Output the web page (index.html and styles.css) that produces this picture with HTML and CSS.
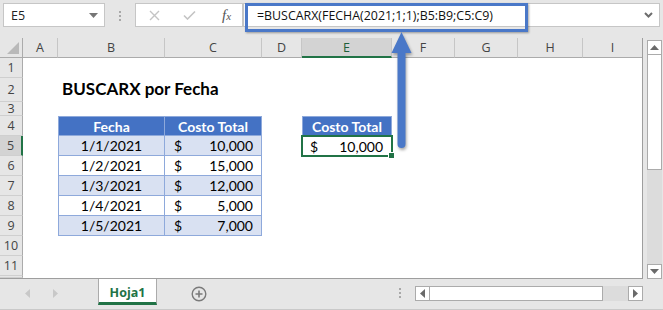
FILE: index.html
```html
<!DOCTYPE html>
<html lang="es">
<head>
    <meta charset="UTF-8">
    <title>BUSCARX por Fecha</title>
    <link rel="stylesheet" href="styles.css">
</head>
<body>
<div class="app">
    <!-- formula bar -->
    <div class="formula-bar">
        <div class="name-box">
            <span>E5</span>
            <svg width="9" height="5" viewBox="0 0 9 5"><polygon points="0,0 9,0 4.5,5" fill="#767676"/></svg>
        </div>
        <div class="grip"><span></span><span></span><span></span></div>
        <div class="fx-buttons">
            <svg class="btn-x" width="11" height="11" viewBox="0 0 11 11"><path d="M1 1L10 10M10 1L1 10" stroke="#c4c4c4" stroke-width="1.4"/></svg>
            <svg class="btn-ok" width="13" height="10" viewBox="0 0 13 10"><path d="M1 5.5L4.5 9L12 1.5" stroke="#c4c4c4" stroke-width="1.6" fill="none"/></svg>
            <span class="fx">f<small>x</small></span>
        </div>
        <div class="formula">
            <span>=BUSCARX(FECHA(2021;1;1);B5:B9;C5:C9)</span>
            <svg width="9" height="6" viewBox="0 0 9 6"><path d="M1 1L4.5 4.5L8 1" stroke="#6d6d6d" stroke-width="2" fill="none"/></svg>
        </div>
        <div class="highlight"></div>
    </div>

    <div class="main">
        <div class="grid">
            <!-- column headers -->
            <div class="corner"><svg width="12" height="12" viewBox="0 0 12 12"><polygon points="12,0 12,12 0,12" fill="#b9b9b9"/></svg></div>
            <div class="ch">A</div>
            <div class="ch">B</div>
            <div class="ch">C</div>
            <div class="ch">D</div>
            <div class="ch sel">E</div>
            <div class="ch">F</div>
            <div class="ch">G</div>
            <div class="ch">H</div>
            <div class="ch last">I</div>

            <!-- row 1 -->
            <div class="rh">1</div>
            <div class="span9"></div>

            <!-- row 2 -->
            <div class="rh">2</div>
            <div></div>
            <div class="title">BUSCARX por Fecha</div>
            <div class="span5"></div>

            <!-- row 3 -->
            <div class="rh">3</div>
            <div class="span9"></div>

            <!-- row 4 -->
            <div class="rh">4</div>
            <div></div>
            <div class="cell th top left">Fecha</div>
            <div class="cell th top">Costo Total</div>
            <div></div>
            <div class="cell th top left">Costo Total</div>
            <div class="span4"></div>

            <!-- row 5 -->
            <div class="rh sel">5</div>
            <div></div>
            <div class="cell date band left">1/1/2021</div>
            <div class="cell money band"><span>$</span><span>10,000</span></div>
            <div></div>
            <div class="cell money active"><span>$</span><span>10,000</span></div>
            <div class="span4"></div>

            <!-- row 6 -->
            <div class="rh">6</div>
            <div></div>
            <div class="cell date left">1/2/2021</div>
            <div class="cell money"><span>$</span><span>15,000</span></div>
            <div class="span6"></div>

            <!-- row 7 -->
            <div class="rh">7</div>
            <div></div>
            <div class="cell date band left">1/3/2021</div>
            <div class="cell money band"><span>$</span><span>12,000</span></div>
            <div class="span6"></div>

            <!-- row 8 -->
            <div class="rh">8</div>
            <div></div>
            <div class="cell date left">1/4/2021</div>
            <div class="cell money"><span>$</span><span>5,000</span></div>
            <div class="span6"></div>

            <!-- row 9 -->
            <div class="rh">9</div>
            <div></div>
            <div class="cell date band left">1/5/2021</div>
            <div class="cell money band"><span>$</span><span>7,000</span></div>
            <div class="span6"></div>

            <!-- rows 10 - 12 -->
            <div class="rh">10</div>
            <div class="span9"></div>
            <div class="rh">11</div>
            <div class="span9"></div>
            <div class="rh"></div>
            <div class="span9"></div>
        </div>

        <div class="vscroll">
            <div class="sbtn"><svg width="9" height="5" viewBox="0 0 9 5"><polygon points="4.5,0 9,5 0,5" fill="#6a6a6a"/></svg></div>
            <div class="vthumb"></div>
            <div class="vtrack"></div>
            <div class="sbtn"><svg width="9" height="5" viewBox="0 0 9 5"><polygon points="0,0 9,0 4.5,5" fill="#6a6a6a"/></svg></div>
        </div>
    </div>

    <!-- sheet tabs -->
    <div class="tabbar">
        <div class="tab-nav">
            <svg width="5" height="9" viewBox="0 0 5 9"><polygon points="5,0 5,9 0,4.5" fill="#c8c8c8"/></svg>
            <svg width="5" height="9" viewBox="0 0 5 9"><polygon points="0,0 0,9 5,4.5" fill="#c8c8c8"/></svg>
        </div>
        <div class="tab">Hoja1</div>
        <svg class="add" width="16" height="16" viewBox="0 0 16 16">
            <circle cx="8" cy="8" r="6.8" stroke="#7a7a7a" stroke-width="1.4" fill="none"/>
            <path d="M8 4.5V11.5M4.5 8H11.5" stroke="#7a7a7a" stroke-width="1.6"/>
        </svg>
        <div class="spacer"></div>
        <div class="hgrip"><span></span><span></span><span></span></div>
        <div class="hscroll">
            <div class="sbtn h"><svg width="5" height="9" viewBox="0 0 5 9"><polygon points="5,0 5,9 0,4.5" fill="#6a6a6a"/></svg></div>
            <div class="hthumb"></div>
            <div class="htrack"></div>
            <div class="sbtn h"><svg width="5" height="9" viewBox="0 0 5 9"><polygon points="0,0 0,9 5,4.5" fill="#6a6a6a"/></svg></div>
        </div>
    </div>

    <!-- callout arrow from E5 to the formula -->
    <svg class="arrow" width="32" height="126" viewBox="0 0 32 126">
        <path d="M15.5 4L25.5 25H19.5V116A4 4 0 0 1 11.5 116V25H5.5Z" fill="#4a78c8"/>
    </svg>
</div>
</body>
</html>
```

FILE: styles.css
```css
* {
    box-sizing: border-box;
}
body {
    margin: 0;
    background-color: #e6e6e6;
    font-family: "Open Sans", "Noto Sans", sans-serif;
}
.app {
    position: relative;
    width: 663px;
    height: 310px;
    overflow: hidden;
}

/* formula bar */
.formula-bar {
    position: relative;
    display: flex;
    align-items: flex-start;
    height: 38px;
    padding: 3px 3px 0 3px;
}
.name-box {
    display: flex;
    align-items: center;
    justify-content: space-between;
    width: 102px;
    height: 24px;
    padding: 0 6px 0 7px;
    background-color: #fff;
    border: 1px solid #c6c6c6;
    font-size: 12.5px;
    color: #222;
}
.grip {
    display: flex;
    flex-direction: column;
    align-items: center;
    gap: 2px;
    width: 30px;
    padding-top: 8px;
}
.grip span,
.hgrip span {
    width: 2px;
    height: 2px;
    background-color: #a8a8a8;
}
.fx-buttons {
    display: flex;
    align-items: center;
    width: 108px;
    height: 24px;
    padding-left: 13px;
    background-color: #fff;
    border: 1px solid #c6c6c6;
}
.btn-ok {
    margin-left: 23px;
}
.fx {
    margin-left: 26px;
    font-family: "Liberation Serif", serif;
    font-style: italic;
    font-size: 15px;
    color: #555;
}
.fx small {
    font-size: 11px;
}
.formula {
    display: flex;
    align-items: center;
    justify-content: space-between;
    flex: 1;
    height: 24px;
    padding: 0 6px 0 13px;
    background-color: #fff;
    border: 1px solid #c6c6c6;
    font-size: 12.4px;
    color: #111;
}
.highlight {
    position: absolute;
    left: 245px;
    top: 3px;
    width: 283px;
    height: 29px;
    border: 3px solid #4a78c8;
    box-shadow: 1px 1px 2px rgba(0, 0, 0, 0.35);
}

/* grid */
.main {
    display: flex;
}
.grid {
    display: grid;
    grid-template-columns: 23px 35px 107px 97px 40px 90px 63px 63px 65px 59px;
    grid-template-rows: 20px 20px 24px 14px repeat(8, 20px) 2px;
    width: 643px;
    background-color: #fff;
    border-right: 1px solid #9e9e9e;
    border-bottom: 1px solid #9e9e9e;
}
.span4 { grid-column: span 4; }
.span5 { grid-column: span 5; }
.span6 { grid-column: span 6; }
.span9 { grid-column: span 9; }

.corner {
    display: flex;
    align-items: flex-end;
    justify-content: flex-end;
    padding: 0 3px 3px 0;
    background-color: #e6e6e6;
    border-right: 1px solid #ababab;
    border-bottom: 1px solid #ababab;
}
.ch {
    display: flex;
    align-items: center;
    justify-content: center;
    background-color: #e6e6e6;
    border-right: 1px solid #c6c6c6;
    border-bottom: 1px solid #ababab;
    font-size: 12.5px;
    color: #444;
}
.ch.last {
    border-right: none;
}
.ch.sel {
    background-color: #d3d3d3;
    border-bottom: 2px solid #217346;
    color: #1d5f3a;
}
.rh {
    display: flex;
    align-items: center;
    justify-content: center;
    background-color: #e6e6e6;
    border-right: 1px solid #ababab;
    border-bottom: 1px solid #cfcfcf;
    font-size: 12.5px;
    color: #444;
}
.rh.sel {
    background-color: #d3d3d3;
    border-right: 2px solid #217346;
}

.title {
    grid-column: span 3;
    display: flex;
    align-items: flex-end;
    padding: 0 0 3px 4px;
    font-family: Lato, sans-serif;
    font-weight: 700;
    font-size: 17px;
    color: #000;
}
.cell {
    display: flex;
    align-items: center;
    font-family: Lato, sans-serif;
    font-size: 14px;
    color: #000;
    border-right: 1px solid #8ea9db;
    border-bottom: 1px solid #8ea9db;
}
.cell.left {
    border-left: 1px solid #8ea9db;
}
.cell.top {
    border-top: 1px solid #8ea9db;
}
.th {
    justify-content: center;
    background-color: #4472c4;
    color: #fff;
    font-weight: 700;
}
.band {
    background-color: #d9e1f2;
}
.date {
    justify-content: center;
}
.money {
    justify-content: space-between;
    padding: 0 8px 0 9px;
}
.active {
    position: relative;
    border: none;
    padding: 0 9px 0 8px;
}
.active::after {
    content: "";
    position: absolute;
    left: -1px;
    top: -1px;
    right: -1px;
    bottom: -1px;
    border: 2px solid #217346;
}
.active::before {
    content: "";
    position: absolute;
    right: -3px;
    bottom: -3px;
    width: 5px;
    height: 5px;
    background-color: #217346;
    border: 1px solid #fff;
    z-index: 1;
}

/* scrollbars */
.vscroll {
    display: flex;
    flex-direction: column;
    width: 20px;
    padding: 2px 1px 0 4px;
}
.sbtn {
    display: flex;
    align-items: center;
    justify-content: center;
    height: 15px;
    background-color: #fff;
    border: 1px solid #ababab;
}
.vthumb {
    height: 115px;
    background-color: #fff;
    border: 1px solid #ababab;
    border-top: none;
}
.vtrack {
    flex: 1;
    background-color: #dcdcdc;
}

/* tab bar */
.tabbar {
    display: flex;
    align-items: flex-start;
    height: 31px;
    border-bottom: 1px solid #c9c9c9;
}
.tab-nav {
    display: flex;
    gap: 23px;
    width: 98px;
    padding: 10px 0 0 25px;
}
.tab {
    display: flex;
    align-items: center;
    justify-content: center;
    width: 59px;
    height: 26px;
    padding-top: 3px;
    background-color: #fff;
    border-left: 1px solid #ababab;
    border-right: 1px solid #ababab;
    border-bottom: 3px solid #217346;
    font-weight: 700;
    font-size: 12.5px;
    color: #217346;
}
.add {
    margin: 7px 0 0 34px;
}
.spacer {
    flex: 1;
}
.hgrip {
    display: flex;
    flex-direction: column;
    gap: 2px;
    margin: 9px 14px 0 0;
}
.hscroll {
    display: flex;
    width: 228px;
    height: 15px;
    margin: 7px 20px 0 0;
}
.sbtn.h {
    width: 15px;
    height: 15px;
}
.hthumb {
    width: 173px;
    background-color: #fff;
    border: 1px solid #ababab;
    border-left: none;
}
.htrack {
    flex: 1;
    background-color: #dcdcdc;
}

.arrow {
    position: absolute;
    left: 386px;
    top: 28px;
    filter: drop-shadow(1px 2px 1.5px rgba(0, 0, 0, 0.35));
}
```
